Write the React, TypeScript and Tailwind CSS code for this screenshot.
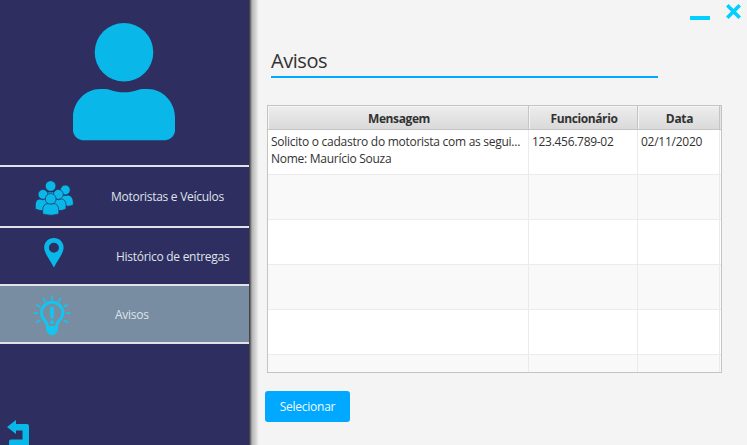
import React from 'react';

const UserIcon = () => (
  <svg width="102" height="118" viewBox="73 22.7 102 118" fill="#09b8e8">
    <circle cx="124" cy="52" r="29.3" />
    <path d="M73 117C73 101 86 88.700 100 88.700H106C111 89 113 92 124 92S137 89 142 88.700H148C162 88.700 175 101 175 117V131Q174 138 166 140H82Q74 138 73 131Z" />
  </svg>
);

const GroupIcon = () => (
  <svg width="40" height="37" viewBox="35 179 40 37" fill="#09b8e8" stroke="#2e2e60" strokeWidth="0.7">
    <circle cx="50.6" cy="186" r="5.3" />
    <path d="M43 204V198Q43 192 49 192H53Q59 192 59 198V204Z" />
    <circle cx="65.3" cy="190" r="4.9" />
    <path d="M58 205V201Q59 195 63 195Q65 196 68 195Q73 196 73.3 202V205Q69 207 64 205.8Z" />
    <circle cx="43" cy="194.4" r="4.9" />
    <circle cx="58.3" cy="194.4" r="4.9" />
    <path d="M35.3 209V205Q35.5 199 40 199Q43 200.5 46 199Q50.5 199 50.8 205V210Q42 212 35.3 209Z" />
    <path d="M50 210V205Q51 199 55.5 199Q58 200.5 61.5 199Q65.8 199.5 66 205V209Q60 212 50 210Z" />
    <circle cx="50.7" cy="199" r="5.4" />
    <path d="M42.7 214V210Q43 203.6 48 203.6Q51 205 54 203.6Q58.5 204 58.8 210V214Q51 216.5 42.7 214Z" />
  </svg>
);

const PinIcon = () => (
  <svg width="20" height="30" viewBox="43.5 238 20 30" fill="#09b8e8">
    <path fillRule="evenodd" d="M53.4 238.1C47.8 238.1 43.7 242.3 43.7 247.6C43.7 253 48 257.5 53.4 267.4C58.8 257.5 63.1 253 63.1 247.6C63.1 242.3 59 238.1 53.4 238.1ZM53.4 242.7A5 5 0 1 1 53.4 252.7A5 5 0 1 1 53.4 242.7Z" />
  </svg>
);

const BulbIcon = () => (
  <svg width="38" height="41" viewBox="33 294.5 38 41" fill="none" stroke="#14c5ef" strokeLinecap="round">
    <path strokeWidth="3" d="M47.5 325.5C47 320 41.3 318.5 41.3 312.5A10.8 10.8 0 0 1 62.9 312.5C62.9 318.5 57 320 56.5 325.5" />
    <path stroke="none" fill="#14c5ef" d="M46 325.5H58V329.5L56 332.5Q55 334.8 52 334.8T48 332.5L46 329.5Z" />
    <path stroke="none" fill="#14c5ef" d="M49.8 307.5Q52 305 54.2 307.5L53.5 318.3H50.5Z" />
    <circle cx="52" cy="321.7" r="2" stroke="none" fill="#14c5ef" />
    <path strokeWidth="1.7" d="M52 295.5V299M43.5 298L45 300.5M60.5 298L59 300.5M37 304.5L39.5 305.8M67 304.5L64.500 305.8M34.5 312.7H37M67 312.7H69.5M37 321.5L39.5 320M67 321.5L64.5 320" />
  </svg>
);

const BackIcon = () => (
  <svg width="22" height="25" viewBox="7 420 22 25" fill="#09b8e8">
    <path d="M7 427L16 420V424H27Q29 424 29 426V445H9V441.5Q9 439.5 11 439.5H22.5V430.5H16V434Z" />
  </svg>
);

const WindowIcons = () => (
  <svg width="52" height="17" viewBox="690 4 52 17" fill="none" stroke="#00cfff">
    <path d="M690 18H710" strokeWidth="4" />
    <path d="M727.3 5.3L739.7 17.7M739.7 5.3L727.3 17.7" strokeWidth="3.6" />
  </svg>
);

const columns = 'grid grid-cols-[261px_109px_82px_1px]';
const headCell =
  'h-[24px] overflow-hidden border-r border-b border-[#c4c4c4] bg-linear-to-b from-[#ededed] to-[#dadada] pl-[2px] text-center text-[12px] leading-[25px] font-bold whitespace-nowrap shadow-[inset_1px_1px_0_#f5f5f5]';
const bodyCell = 'overflow-hidden border-r border-b border-[#ebebeb] pl-[3px] pt-[3px] whitespace-nowrap';

type Row = { message: string[]; employee: string; date: string };

const rows: Row[] = [
  {
    message: ['Solicito o cadastro do motorista com as segui...', 'Nome: Maurício Souza'],
    employee: '123.456.789-02',
    date: '02/11/2020',
  },
  ...Array.from({ length: 5 }, () => ({ message: [], employee: '', date: '' })),
];

export default function App() {
  return (
    <div className="flex h-[445px] w-[747px] overflow-hidden bg-[#f4f4f4] font-['Open_Sans','Noto_Sans',sans-serif] text-[12px] leading-[17px] text-[#323232]">
      <aside className="flex h-full w-[249px] shrink-0 flex-col bg-[#2e2e60] text-[#dfe3ea]">
        <div className="h-[165px] shrink-0 pt-[22.7px] pl-[73px]">
          <UserIcon />
        </div>
        <nav className="border-b-2 border-[#e2e2e9]">
          <div className="flex h-[61px] border-t-2 border-[#e2e2e9] pl-[35px]">
            <div className="w-[76px] pt-[12px]"><GroupIcon /></div>
            <span className="pt-[21px] tracking-[-0.28px] whitespace-nowrap">Motoristas e Veículos</span>
          </div>
          <div className="flex h-[58px] border-t-2 border-[#e2e2e9] pl-[43.5px]">
            <div className="w-[72.5px] pt-[10px]"><PinIcon /></div>
            <span className="pt-[20px] tracking-[-0.28px] whitespace-nowrap">Histórico de entregas</span>
          </div>
          <div className="flex h-[58px] border-t-2 border-[#e2e2e9] bg-[#788da2] pl-[33px]">
            <div className="w-[82px] pt-[8.5px]"><BulbIcon /></div>
            <span className="pt-[20px] tracking-[-0.25px]">Avisos</span>
          </div>
        </nav>
        <div className="mt-auto pl-[7px]"><BackIcon /></div>
      </aside>
      <div className="h-full w-[10px] shrink-0 bg-linear-to-r from-[#303033] via-[#b4b4b4] via-30% to-[#f4f4f4]" />
      <main className="flex-1">
        <div className="flex h-[21px] justify-end pt-[4px] pr-[5px]"><WindowIcons /></div>
        <h1 className="ml-[12px] h-[57px] w-[387px] border-b-2 border-[#00a8ff] pt-[26px] text-[20px] leading-[28px] tracking-[-0.45px]">
          Avisos
        </h1>
        <section className="mt-[27px] ml-[8px] h-[268px] w-[455px] overflow-hidden border border-[#c4c4c4] bg-white">
          <div className={columns}>
            <div className={`${headCell} tracking-[-0.4px]`}>Mensagem</div>
            <div className={`${headCell} tracking-[-0.4px]`}>Funcionário</div>
            <div className={`${headCell} tracking-[-0.3px]`}>Data</div>
            <div className="border-b border-[#c4c4c4] bg-[#e4e4e4]" />
          </div>
          {rows.map((row, i) => (
            <div key={i} className={`${columns} h-[45px] ${i % 2 ? 'bg-[#f9f9f9]' : 'bg-white'}`}>
              <div className={`${bodyCell} tracking-[-0.27px]`}>
                {row.message.map((line) => <div key={line}>{line}</div>)}
              </div>
              <div className={`${bodyCell} tracking-[-0.3px]`}>{row.employee}</div>
              <div className={`${bodyCell} tracking-[-0.25px]`}>{row.date}</div>
              <div className="border-b border-[#ebebeb]" />
            </div>
          ))}
        </section>
        <button className="mt-[18px] ml-[6px] block h-[31px] w-[85px] rounded-[3px] bg-[#00a8ff] text-[12px] tracking-[-0.25px] text-[#f0faff]">
          Selecionar
        </button>
      </main>
    </div>
  );
}
